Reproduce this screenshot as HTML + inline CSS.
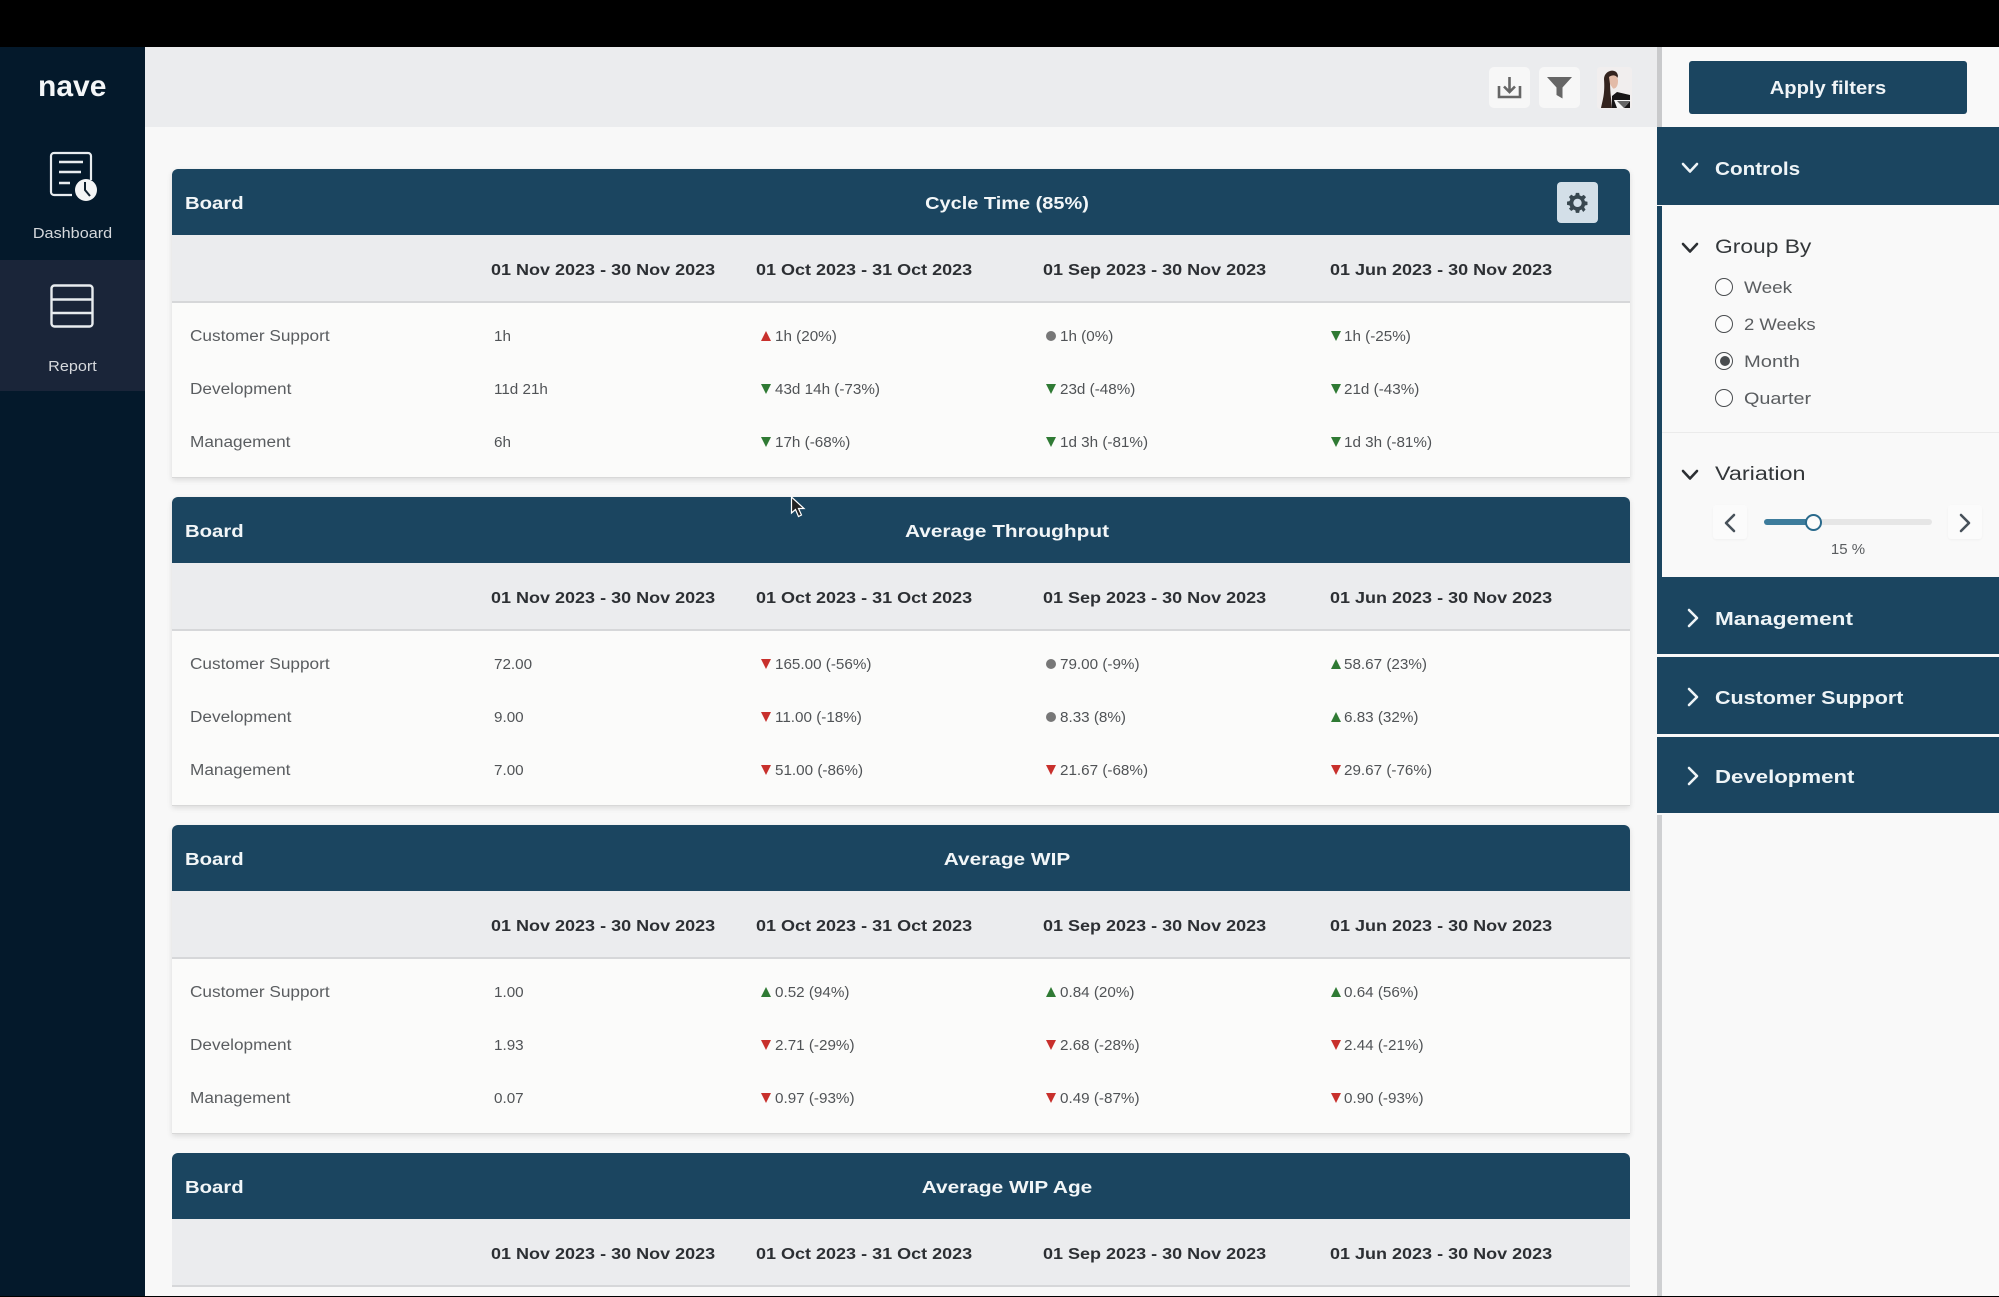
<!DOCTYPE html>
<html lang="en"><head><meta charset="utf-8"><title>nave</title>
<style>
html,body{margin:0;padding:0;background:#000}
body{position:relative;width:1999px;height:1297px;overflow:hidden;font-family:"Liberation Sans",sans-serif}
div,span,svg{position:absolute;display:block}
i{position:absolute;display:block}
.t{white-space:nowrap;line-height:20px;height:20px;transform-origin:0 50%}
.side{left:0;top:47px;width:145px;height:1249px;background:#04192b}
.act{left:0;top:260px;width:145px;height:131px;background:#1a2539}
.nav{width:145px;left:0;text-align:center;color:#d5d8dc;font-size:15px;line-height:20px;transform:scaleX(1.08);transform-origin:50% 50%}
.main{left:145px;top:47px;width:1512px;height:1249px;background:#f8f8f8}
.top{left:145px;top:47px;width:1512px;height:80px;background:#ebecee}
.btn{background:#f7f7f7;border-radius:5px;width:41px;height:41px;top:67px}
.card{left:172px;width:1458px;height:308px;background:#fbfbfa;box-shadow:0 2px 6px rgba(0,0,0,.12);border-bottom:1px solid #d8d8d8;border-radius:6px 6px 0 0}
.hd{left:0;top:0;width:1458px;height:66px;background:#1b4560;border-radius:6px 6px 0 0}
.dr{left:0;top:66px;width:1458px;height:66px;background:#ebecee;border-bottom:2px solid #d6d7d9}
.b{color:#f2f6f8;font-weight:bold;font-size:17.5px;left:13px;top:24px;transform:scaleX(1.16)}
.ti{color:#f2f6f8;font-weight:bold;font-size:17.5px;left:835px;top:24px;transform:translateX(-50%) scaleX(1.19);transform-origin:50% 50%}
.da{color:#2c2f33;font-weight:bold;font-size:16px;top:26px;transform:scaleX(1.125)}
.c1{left:319px}.c2{left:584px}.c3{left:871px}.c4{left:1158px}
.r{left:0;width:1458px;height:20px}
.l{left:18px;top:1px;color:#5a5d60;font-size:15.5px;transform:scaleX(1.11)}
.v{top:0.5px;color:#505356;font-size:14.5px;transform:scaleX(1.05)}
.v1{left:322px}.v2{left:603px}.v3{left:888px}.v4{left:1172px}
.i2{left:589px}.i3{left:874px}.i4{left:1159px}
.dn,.up{top:5px;width:0;height:0;border-left:5.5px solid transparent;border-right:5.5px solid transparent}
.dn{border-top:10px solid}.up{border-bottom:10px solid}
.g{border-top-color:#2f7a34;border-bottom-color:#2f7a34}
.re{border-top-color:#c8302c;border-bottom-color:#c8302c}
.o{top:5px;width:10px;height:10px;border-radius:50%;background:#777}
.pan{left:1657px;top:47px;width:342px;height:1249px;background:#f9f9f9}
.bar{left:1657px;width:5px}
.ph{left:1657px;width:342px;background:#1b4560}
.pt{left:1715px;color:#eef4f7;font-weight:bold;font-size:18.5px;transform:scaleX(1.12)}
.gt{left:1715px;color:#33373a;font-size:19px;transform:scaleX(1.2)}
.ra{left:1715px;width:16px;height:16px;border:1.6px solid #4a4d50;border-radius:50%;background:#fcfcfc}
.rl{left:1744px;color:#5a5d60;font-size:16.5px;transform:scaleX(1.17)}
.ch{fill:none;stroke-width:2.6;stroke-linecap:round;stroke-linejoin:round}
</style></head><body>

<div class="side"></div><div class="act"></div>
<div class="t" style="left:38px;top:71px;color:#f4f6f8;font-size:30px;font-weight:bold;line-height:32px;height:32px">nave</div>
<svg style="left:48px;top:150px" width="50" height="52" viewBox="0 0 50 52">
 <path d="M24 45H6a3 3 0 0 1-3-3V6a3 3 0 0 1 3-3h34a3 3 0 0 1 3 3v24" fill="none" stroke="#e8ecef" stroke-width="2.2"/>
 <path d="M11 12H35M11 22H33M11 33H22" stroke="#e8ecef" stroke-width="2.4"/>
 <circle cx="38" cy="40" r="11" fill="#f4f5f6"/><path d="M37 32V40L42 46" fill="none" stroke="#10202e" stroke-width="2"/>
</svg>
<div class="nav t" style="top:224px">Dashboard</div>
<svg style="left:49px;top:283px" width="46" height="46" viewBox="0 0 46 46" fill="none" stroke="#e8ecef" stroke-width="2.4">
 <rect x="2.5" y="2.5" width="41" height="41" rx="3"/><path d="M3 16.5H43M3 30H43"/>
</svg>
<div class="nav t" style="top:357px">Report</div>

<div class="main"></div><div class="top"></div>
<div class="btn" style="left:1489px"></div><div class="btn" style="left:1539px"></div>
<svg style="left:1496px;top:75px" width="27" height="25" viewBox="0 0 27 25" fill="none" stroke="#666" stroke-width="2.6">
 <path d="M3 11V22H24V11M13.500 2V16.500M8 11.500L13.500 17L19 11.500"/>
</svg>
<svg style="left:1545px;top:75px" width="29" height="25" viewBox="0 0 29 25"><path d="M2 2H27L17.500 12.500V23.500L11.500 20V12.500Z" fill="#666"/></svg>
<svg style="left:1597px;top:67px" width="36" height="43" viewBox="0 0 36 43">
 <rect x="0" y="0" width="35" height="42" fill="#f1eeee" rx="3"/>
 <path d="M4 41C6 32 8 26 7 12C7 3 20 0 21 9L20 12L13 14C13 24 14 30 15 41Z" fill="#33231e"/>
 <path d="M12 10C16 7 21 8 21 14C21 20 18 22 16 21.500L13 17Z" fill="#e3bba8"/>
 <path d="M15 41L15 29L20 25L33 28V41Z" fill="#171516"/>
 <path d="M17 33H34L27 41H20Z" fill="#f5f5f5"/><path d="M20 34H33L27 41Z" fill="#666"/>
</svg>

<!-- card 1 -->
<div class="card" style="top:169px">
 <div class="hd"><span class="t b">Board</span><span class="t ti" style="transform:translateX(-50%) scaleX(1.14)">Cycle Time (85%)</span></div>
 <div style="left:1385px;top:13px;width:41px;height:41px;background:#d3dfe8;border-radius:4px"></div>
 <svg style="left:1395px;top:23px" width="21" height="21" viewBox="0 0 24 24"><path fill="#38474f" fill-rule="evenodd" d="M10 1h4l.6 3 2.3 1 2.6-1.7 2.8 2.8L20 8.7l1 2.3 3 .6v4l-3 .6-1 2.3 1.700 2.600-2.800 2.800L16.900 21l-2.300 1L14 25h-4l-.6-3-2.300-1-2.600 1.700-2.800-2.800L3.400 18.300l-1-2.300-3-.6v-4l3-.6 1-2.300L1.700 5.900l2.800-2.800L7.100 4.800l2.300-1ZM12 8a5 5 0 1 0 .001 0Z" transform="translate(0.6 0.1) scale(.95)"/></svg>
 <div class="dr"><span class="t da c1">01 Nov 2023 - 30 Nov 2023</span><span class="t da c2">01 Oct 2023 - 31 Oct 2023</span><span class="t da c3">01 Sep 2023 - 30 Nov 2023</span><span class="t da c4">01 Jun 2023 - 30 Nov 2023</span></div>
 <div class="r" style="top:157px"><span class="t l">Customer Support</span><span class="t v v1">1h</span><i class="up re i2"></i><span class="t v v2">1h (20%)</span><i class="o i3"></i><span class="t v v3">1h (0%)</span><i class="dn g i4"></i><span class="t v v4">1h (-25%)</span></div>
 <div class="r" style="top:210px"><span class="t l">Development</span><span class="t v v1">11d 21h</span><i class="dn g i2"></i><span class="t v v2">43d 14h (-73%)</span><i class="dn g i3"></i><span class="t v v3">23d (-48%)</span><i class="dn g i4"></i><span class="t v v4">21d (-43%)</span></div>
 <div class="r" style="top:263px"><span class="t l">Management</span><span class="t v v1">6h</span><i class="dn g i2"></i><span class="t v v2">17h (-68%)</span><i class="dn g i3"></i><span class="t v v3">1d 3h (-81%)</span><i class="dn g i4"></i><span class="t v v4">1d 3h (-81%)</span></div>
</div>

<!-- card 2 -->
<div class="card" style="top:497px">
 <div class="hd"><span class="t b">Board</span><span class="t ti">Average Throughput</span></div>
 <div class="dr"><span class="t da c1">01 Nov 2023 - 30 Nov 2023</span><span class="t da c2">01 Oct 2023 - 31 Oct 2023</span><span class="t da c3">01 Sep 2023 - 30 Nov 2023</span><span class="t da c4">01 Jun 2023 - 30 Nov 2023</span></div>
 <div class="r" style="top:157px"><span class="t l">Customer Support</span><span class="t v v1">72.00</span><i class="dn re i2"></i><span class="t v v2">165.00 (-56%)</span><i class="o i3"></i><span class="t v v3">79.00 (-9%)</span><i class="up g i4"></i><span class="t v v4">58.67 (23%)</span></div>
 <div class="r" style="top:210px"><span class="t l">Development</span><span class="t v v1">9.00</span><i class="dn re i2"></i><span class="t v v2">11.00 (-18%)</span><i class="o i3"></i><span class="t v v3">8.33 (8%)</span><i class="up g i4"></i><span class="t v v4">6.83 (32%)</span></div>
 <div class="r" style="top:263px"><span class="t l">Management</span><span class="t v v1">7.00</span><i class="dn re i2"></i><span class="t v v2">51.00 (-86%)</span><i class="dn re i3"></i><span class="t v v3">21.67 (-68%)</span><i class="dn re i4"></i><span class="t v v4">29.67 (-76%)</span></div>
</div>

<!-- card 3 -->
<div class="card" style="top:825px">
 <div class="hd"><span class="t b">Board</span><span class="t ti">Average WIP</span></div>
 <div class="dr"><span class="t da c1">01 Nov 2023 - 30 Nov 2023</span><span class="t da c2">01 Oct 2023 - 31 Oct 2023</span><span class="t da c3">01 Sep 2023 - 30 Nov 2023</span><span class="t da c4">01 Jun 2023 - 30 Nov 2023</span></div>
 <div class="r" style="top:157px"><span class="t l">Customer Support</span><span class="t v v1">1.00</span><i class="up g i2"></i><span class="t v v2">0.52 (94%)</span><i class="up g i3"></i><span class="t v v3">0.84 (20%)</span><i class="up g i4"></i><span class="t v v4">0.64 (56%)</span></div>
 <div class="r" style="top:210px"><span class="t l">Development</span><span class="t v v1">1.93</span><i class="dn re i2"></i><span class="t v v2">2.71 (-29%)</span><i class="dn re i3"></i><span class="t v v3">2.68 (-28%)</span><i class="dn re i4"></i><span class="t v v4">2.44 (-21%)</span></div>
 <div class="r" style="top:263px"><span class="t l">Management</span><span class="t v v1">0.07</span><i class="dn re i2"></i><span class="t v v2">0.97 (-93%)</span><i class="dn re i3"></i><span class="t v v3">0.49 (-87%)</span><i class="dn re i4"></i><span class="t v v4">0.90 (-93%)</span></div>
</div>

<!-- card 4 -->
<div style="left:172px;top:1153px;width:1458px;height:143px;overflow:hidden">
 <div class="hd"><span class="t b">Board</span><span class="t ti">Average WIP Age</span></div>
 <div class="dr"><span class="t da c1">01 Nov 2023 - 30 Nov 2023</span><span class="t da c2">01 Oct 2023 - 31 Oct 2023</span><span class="t da c3">01 Sep 2023 - 30 Nov 2023</span><span class="t da c4">01 Jun 2023 - 30 Nov 2023</span></div>
</div>

<!-- cursor -->
<svg style="left:790px;top:496px" width="16" height="23" viewBox="0 0 16 23"><path d="M1.500 1V17L5.500 13.500L8.500 20.500L11.500 19L8.500 12.500H14Z" fill="#222" stroke="#fff" stroke-width="1.200"/></svg>

<!-- right panel -->
<div class="pan"></div>
<div class="bar" style="top:47px;height:80px;background:#c9cacc"></div>
<div class="bar" style="top:815px;height:481px;background:#cfd0d2"></div>
<div class="bar" style="top:206px;height:371px;background:#1b4560"></div>
<div style="left:1689px;top:61px;width:278px;height:53px;background:#1b4560;border-radius:3px"></div>
<div class="t" style="left:1689px;width:278px;top:78px;text-align:center;color:#f0f4f7;font-weight:bold;font-size:18px;transform:scaleX(1.12);transform-origin:50% 50%">Apply filters</div>
<div class="ph" style="top:127px;height:78px"></div>
<svg style="left:1680px;top:161px" width="20" height="14"><path class="ch" stroke="#eef4f7" d="M3 3L10 10.500L17 3"/></svg>
<div class="t pt" style="top:159px">Controls</div>
<svg style="left:1680px;top:241px" width="20" height="14"><path class="ch" stroke="#2c2f33" d="M3 3L10 10.500L17 3"/></svg>
<div class="t gt" style="top:238px">Group By</div>
<div class="ra" style="top:277.500px"></div><div class="t rl" style="top:277.500px;transform:scaleX(1.15)">Week</div>
<div class="ra" style="top:314.500px"></div><div class="t rl" style="top:314.500px;transform:scaleX(1.12)">2 Weeks</div>
<div class="ra" style="top:351.500px"></div><div class="t rl" style="top:351.500px;transform:scaleX(1.22)">Month</div>
<div style="left:1719.800px;top:356.300px;width:10px;height:10px;border-radius:50%;background:#4a4d50"></div>
<div class="ra" style="top:388.500px"></div><div class="t rl" style="top:388.500px;transform:scaleX(1.2)">Quarter</div>
<div style="left:1662px;top:432px;width:337px;height:1px;background:#ebebeb"></div>
<svg style="left:1680px;top:468px" width="20" height="14"><path class="ch" stroke="#2c2f33" d="M3 3L10 10.500L17 3"/></svg>
<div class="t gt" style="left:1715px;top:465px;transform:scaleX(1.23)">Variation</div>
<div style="left:1713px;top:505px;width:34px;height:34px;background:#fbfbfb;box-shadow:0 1px 2px rgba(0,0,0,.04);border-radius:3px"></div>
<svg style="left:1722px;top:512px" width="16" height="22"><path class="ch" stroke="#47515a" d="M12 3L4 11L12 19"/></svg>
<div style="left:1948px;top:505px;width:34px;height:34px;background:#fbfbfb;box-shadow:0 1px 2px rgba(0,0,0,.04);border-radius:3px"></div>
<svg style="left:1957px;top:512px" width="16" height="22"><path class="ch" stroke="#47515a" d="M4 3L12 11L4 19"/></svg>
<div style="left:1764px;top:519px;width:168px;height:6px;background:#e6e6e6;border-radius:3px"></div>
<div style="left:1764px;top:519px;width:48px;height:6px;background:#3d7c9c;border-radius:3px"></div>
<div style="left:1805px;top:513.500px;width:13px;height:13px;border:2.500px solid #2a6a8c;border-radius:50%;background:#fbfbfb"></div>
<div class="t" style="left:1798px;width:100px;top:540px;text-align:center;color:#5a5d60;font-size:15px">15 %</div>

<div class="ph" style="top:577px;height:77px"></div>
<svg style="left:1686px;top:606px" width="14" height="24"><path class="ch" stroke="#eef4f7" stroke-width="3" d="M3 4L11 12L3 20"/></svg>
<div class="t pt" style="top:609px;transform:scaleX(1.22)">Management</div>
<div class="ph" style="top:657px;height:77px"></div>
<svg style="left:1686px;top:685px" width="14" height="24"><path class="ch" stroke="#eef4f7" d="M3 4L11 12L3 20"/></svg>
<div class="t pt" style="top:688px;transform:scaleX(1.16)">Customer Support</div>
<div class="ph" style="top:737px;height:76px"></div>
<svg style="left:1686px;top:764px" width="14" height="24"><path class="ch" stroke="#eef4f7" d="M3 4L11 12L3 20"/></svg>
<div class="t pt" style="top:767px;transform:scaleX(1.2)">Development</div>

<div style="left:0;top:1296px;width:1999px;height:1px;background:#000"></div>
</body></html>
